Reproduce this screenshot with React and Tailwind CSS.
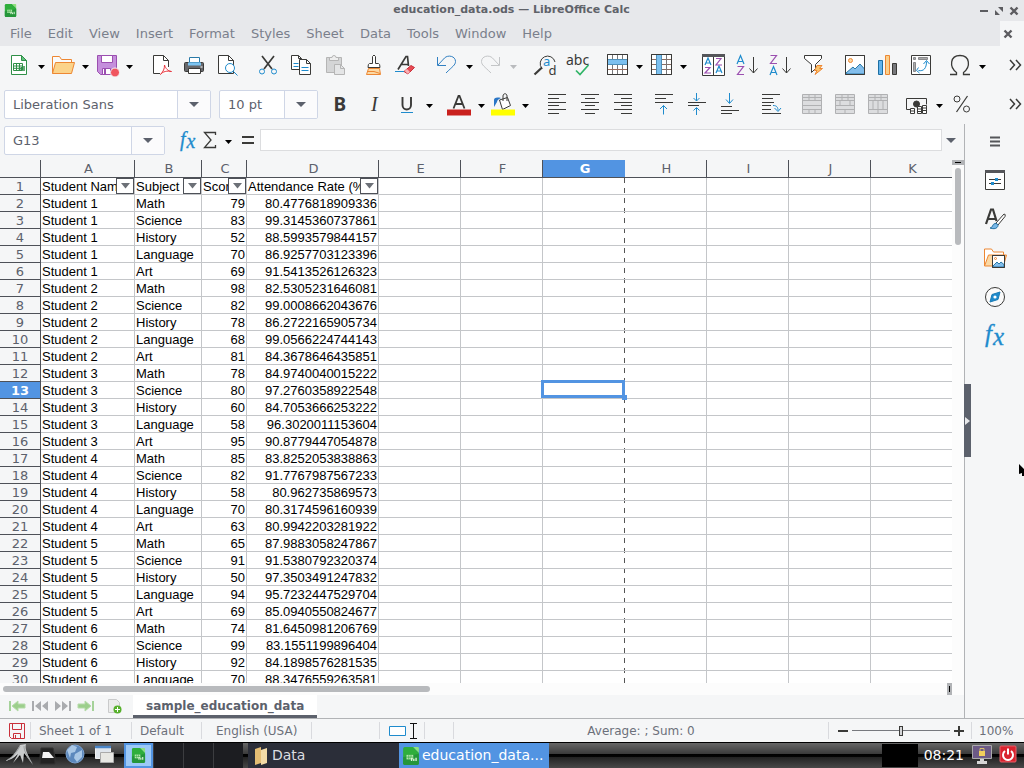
import React from "react";

const INK = "#3a3a38";
const BLUE = "#1e8bcd";
const LIGHT = "#83beec";
const PURPLE = "#9b4fb0";
const ORANGE = "#ed8733";
const GREEN = "#309048";

function Svg({ children, w = 24, h = 24, className = "" }) {
  return (
    <svg width={w} height={h} viewBox={`0 0 ${w} ${h}`} fill="none" stroke={INK} className={`shrink-0 overflow-visible ${className}`} aria-hidden="true">
      {children}
    </svg>
  );
}

const sheetPage = "M4.5 2.5h10l5 5v14h-15z";

const icons = {
  new: (
    <g stroke={GREEN}>
      <path d={sheetPage} fill="#fff" />
      <path d="M14.5 2.5v5h5z" fill="#5fc27c" />
      <path d="M6.5 10.5h9v7h-9zM6.5 13h9M6.5 15.3h9M9.5 10.5v7M12.5 10.5v7" />
      <path d="M12.5 17.500v-3M14.5 18v-4M17 18v-5" strokeWidth="1.500" />
    </g>
  ),
  open: (
    <g stroke={ORANGE}>
      <path d="M1.500 20.500v-17h7l2 3h10v4" fill="#fafafa" />
      <path d="M1.500 20.500l3-11h19l-3 11z" fill="#fbd38a" />
    </g>
  ),
  save: (
    <>
      <path d="M2.500 2.500h19v19h-16l-3-3z" fill="#c58fdc" stroke={PURPLE} />
      <path d="M6.500 2.500h11v7h-11z" fill="#fff" stroke={PURPLE} />
      <path d="M7.500 15.500h8v6h-8z" fill="#fff" stroke={PURPLE} />
      <path d="M10 16v5" stroke={PURPLE} strokeWidth="2" />
      <circle cx="20" cy="19.500" r="4.500" fill="#f0555f" stroke="#f5f6f7" />
    </>
  ),
  pdf: (
    <>
      <path d="M4.500 2.500h10l5 5v13h-15z" fill="#fff" stroke="none" />
      <path d="M11 20.500H4.500v-18h10l5 5V14M14.500 2.500v5h5" />
      <path d="M15.500 12c0 4-1 6-4 9.500 2-3 7-4 11-3-3 0-6-3-7-6.500z" stroke="#e8333c" fill="#fff" />
    </>
  ),
  print: (
    <>
      <rect x="2.500" y="9.500" width="19" height="9" rx="1" fill="#66676b" />
      <path d="M7.500 9.500v-5h10v5z" fill="#fff" stroke="#2a7aa8" />
      <path d="M6 9.500h13v3H6z" fill="#7cc4f2" stroke="none" />
      <path d="M6.500 15.500h12v5h-12z" fill="#fff" />
      <path d="M18.500 14h2" stroke="#fff" />
    </>
  ),
  preview: (
    <>
      <path d="M3.500 2.500h10l5 5v13h-15z" fill="#fff" />
      <path d="M13.500 2.500v5h5" />
      <circle cx="15" cy="15" r="4.500" fill="#fff" stroke={BLUE} />
      <path d="M18.500 18.500l4 4" stroke={BLUE} />
    </>
  ),
  cut: (
    <>
      <path d="M6 3l10 13M18 3L8 16" strokeWidth="1.700" />
      <circle cx="6" cy="18.500" r="2.500" stroke={BLUE} />
      <circle cx="18" cy="18.500" r="2.500" stroke={BLUE} />
    </>
  ),
  copy: (
    <>
      <path d="M2.500 2.500h7l3 3v11h-10z" fill="#fff" />
      <path d="M9.500 2.500v3h3" />
      <path d="M4.500 10.500h5M4.500 13.500h5" stroke={BLUE} />
      <path d="M10.500 6.500h7l4 4v11h-11z" fill="#fff" />
      <path d="M17.500 6.500v4h4" />
      <path d="M12.500 14.500h7M12.500 17.500h7" stroke={BLUE} />
    </>
  ),
  paste: (
    <g stroke="#b5b5b5">
      <path d="M4.500 4.500h15v15h-15z" fill="#d4d5d6" />
      <path d="M7.500 7.500v-3h2.500a2 2 0 0 1 4 0h2.500v3z" fill="#eee" />
      <path d="M12.500 11.500h6l4 4v6h-10z" fill="#e4e5e6" />
      <path d="M18.500 11.500v4h4" />
    </g>
  ),
  brush: (
    <>
      <path d="M11.500 10.500v-7q1.500-3 3 0v7h3q1.500 0 1.500 4H7q0-4 1.500-4z" fill="#fff" />
      <path d="M7.500 15.500h11l1 6h-14z" fill="#fbd9a5" stroke={ORANGE} />
      <path d="M6 18.500h7l6 2" stroke={ORANGE} />
    </>
  ),
  clear: (
    <>
      <path d="M4 16.500L12 3.500h1.500L14.500 13M7 11.500h7" strokeWidth="1.700" />
      <path d="M1 18.500h9" stroke={BLUE} />
      <path d="M10 18.500l7-6 3.500 2-6.500 6.500z" fill="#e84a54" stroke="#c9303a" />
      <path d="M10.500 18l2.500-2 3 3-2 2z" fill="#f7b3b7" stroke="none" />
    </>
  ),
  undo: <path d="M2.500 4v8.500H11M3 12l6.500-7C13 1.500 20.500 3 20.500 8.500c0 3.500-3 5-9.500 11.500" stroke="#3180c2" />,
  redo: <path d="M20.500 4v8.500H12M20 12l-6.500-7C10 1.500 2.500 3 2.500 8.500c0 3.500 3 5 9.500 11.500" stroke="#c3c5c7" />,
  find: (
    <>
      <path d="M9 15.500A7.500 7.500 0 1 1 22 9" />
      <path d="M9 14.500l-7.500 7" strokeWidth="2.200" />
      <text x="10" y="13" fontSize="13" fill={BLUE} stroke="none" fontFamily="Noto Sans">a</text>
      <text x="15.500" y="22" fontSize="13" fill={INK} stroke="none" fontFamily="Noto Sans">d</text>
    </>
  ),
  spell: (
    <>
      <text x="0" y="12" fontSize="14" fill={INK} stroke="none" fontFamily="Noto Sans">abc</text>
      <path d="M10 17.500l4 4 8.500-9.500" stroke="#2fb466" strokeWidth="1.700" />
    </>
  ),
  row: (
    <>
      <path d="M2.500 1.500h20v20h-20z" fill="#fff" />
      <path d="M7.500 2v19M12.500 2v19M17.500 2v19M3 6.500h19" stroke="#77777a" />
      <path d="M3 16.500h19" stroke="#9a6a5a" />
      <path d="M3 6.500h19v5H3z" fill="#7cc0ef" stroke="none" />
      <path d="M3 6.500h19M3 11.500h19" stroke="#4f8fb8" />
      <path d="M2.500 1.500h20v20h-20z" />
    </>
  ),
  col: (
    <>
      <path d="M2.500 1.500h20v20h-20z" fill="#fff" />
      <path d="M3 16.500h19M3 6.500h19M3 11.500h19" stroke="#8a6d62" />
      <path d="M17.500 2v19" stroke="#77777a" />
      <path d="M7.500 2h5v19h-5z" fill="#7cc0ef" stroke="none" />
      <path d="M7.500 2v19M12.500 2v19" stroke="#4f8fb8" />
      <path d="M2.500 1.500h20v20h-20z" />
    </>
  ),
  sort: (
    <>
      <path d="M1.500 1.500h22v21h-22zM12.500 3v19" fill="#fff" />
      <path d="M1 2.500h23" strokeWidth="3" stroke="#55565a" />
      <path d="M4 12l3-7 3 7M5 10h4M15 20l3-7 3 7M16 18h4" stroke={BLUE} strokeWidth="1.200" />
      <path d="M15 5.500h5l-5 6.500h6M4 14.500h5l-5 5.500h6" stroke={PURPLE} strokeWidth="1.200" />
    </>
  ),
  az: (
    <>
      <path d="M3 11l3.500-8.500L10 11M4.500 8.500H9" stroke={BLUE} strokeWidth="1.200" />
      <path d="M3.500 13.500h6l-6 8h6.500" stroke={PURPLE} strokeWidth="1.200" />
      <path d="M19.500 4v16M15.500 15.500l4 4.500 4-4.500" />
    </>
  ),
  za: (
    <>
      <path d="M3.500 2.500h6l-6 8h6.500" stroke={PURPLE} strokeWidth="1.200" />
      <path d="M3 22l3.500-8.500L10 22M4.500 19.500H9" stroke={BLUE} strokeWidth="1.200" />
      <path d="M19.500 4v16M15.500 15.500l4 4.500 4-4.500" />
    </>
  ),
  filter: (
    <>
      <path d="M4.500 2.500h17v3l-6 6v4l-4 4v-8l-7-6z" fill="#fff" />
      <path d="M17 12.500h5l-2.500 3h3L15 21.500l2-4h-2.500z" fill="#fbc46a" stroke={ORANGE} />
    </>
  ),
  image: (
    <>
      <path d="M2.500 2.500h19v19h-19z" fill="#fff" />
      <circle cx="7.500" cy="7.500" r="2" fill="#fbd9a5" stroke={ORANGE} />
      <path d="M3 20l7-6 2 2 5-5 4.500 5V21H3z" fill={LIGHT} stroke="#2a7aa8" />
      <path d="M2.500 2.500h19v19h-19z" />
    </>
  ),
  chart: (
    <>
      <path d="M2.500 7.500h4v14h-4z" fill="#63b4ec" stroke="#1c6fa3" />
      <path d="M9.500 2.500h4v19h-4z" fill="#fbd08b" stroke={ORANGE} />
      <path d="M16.500 10.500h4v11h-4z" fill="#77787b" />
    </>
  ),
  pivot: (
    <>
      <path d="M2.500 2.500h19v19h-19z" fill="#fff" />
      <path d="M4.500 4.500h2v2h-2zM9.500 4.500h9v2h-9zM4.500 9.500h2v9h-2z" fill="#aaa" stroke="#88898c" />
      <path d="M9.500 17.500c5 1 8-2 8-9M9.500 14.500l-2 3 3 2.500M14.500 11l3-3.500 3 3.500" stroke={BLUE} />
    </>
  ),
  omega: <path d="M2 21.500h6.500v-2C1 14 2 2.500 12 2.500S23 14 15.500 19.500v2H22" strokeWidth="1.300" />,
  bold: <text x="4.500" y="19" fontSize="19" fontWeight="700" fill={INK} stroke="none" fontFamily="Noto Sans">B</text>,
  italic: <text x="9" y="19" fontSize="20" fontStyle="italic" fill={INK} stroke="none" fontFamily="Liberation Serif">I</text>,
  underline: (
    <>
      <path d="M7.500 5v8c0 6 8.500 6 8.500 0V5" strokeWidth="1.900" />
      <path d="M6 20.500h12" stroke={BLUE} />
    </>
  ),
  fontcolor: (
    <>
      <path d="M6.500 16.500L11.500 4h1l5 12.500M8.500 12h7" strokeWidth="1.800" />
      <path d="M0 20.500h24" stroke="#c9211e" strokeWidth="6" />
    </>
  ),
  fill: (
    <>
      <path d="M8.500 8l8-2.500 3 8-8 4z" fill="#fff" />
      <path d="M12 9V4c0-3 4-3 4 0v5" />
      <path d="M3 15V8c0-2 2-3 7-2-3 1-4 3-4 4z" fill="#2a76c6" stroke="none" />
      <path d="M0 20.500h24" stroke="#ff0" strokeWidth="6" />
    </>
  ),
  left: <path d="M3 2.500h18M3 6.500h11M3 10.500h18M3 13.500h11M3 17.500h18M3 21.500h11" />,
  center: <path d="M3 2.500h18M7 6.500h10M3 10.500h18M7 13.500h10M3 17.500h18M7 21.500h10" />,
  right: <path d="M3 2.500h18M10 6.500h11M3 10.500h18M10 13.500h11M3 17.500h18M10 21.500h11" />,
  top: (
    <>
      <path d="M3 2.500h18M3 6.500h11M3 10.500h18" />
      <path d="M11.500 22.500v-9M8 17l3.500-3.500L15 17" stroke={BLUE} />
    </>
  ),
  middle: (
    <>
      <path d="M3 10.500h18M3 13.500h11" />
      <path d="M11.500 1v8M8.500 6l3 3 3-3M11.500 23v-7M8.500 18.500l3-3 3 3" stroke={BLUE} />
    </>
  ),
  bottom: (
    <>
      <path d="M3 14.500h11M3 18.500h18M3 21.500h11" />
      <path d="M11.500 1v10M8 7.500l3.500 4 3.500-4" stroke={BLUE} />
    </>
  ),
  wrap: (
    <>
      <path d="M3 2.500h18M3 6.500h11M3 10.500h12M3 13.500h9M3 17.500h9M3 21.500h19" />
      <path d="M14 13.500c4 0 5 2 5 5M15.500 16l3.500 3.500 3-3.500" stroke={BLUE} />
    </>
  ),
  merge: (
    <g stroke="#b0b1b3">
      <path d="M2.500 2.500h19v19h-19z" fill="#dcdddf" />
      <path d="M2.500 5.500h19M2.500 8.500h19M2.500 13.500h19M2.500 17.500h19M9 2.500v6M15 2.500v6M9 17.500v4M15 17.500v4" />
    </g>
  ),
  merge2: (
    <g stroke="#b0b1b3">
      <path d="M2.500 2.500h19v19h-19z" fill="#dcdddf" />
      <path d="M2.500 5.500h19M2.500 8.500h19M2.500 13.500h19M2.500 17.500h19M9 2.500v6M15 2.500v6M7 8.500v5M17 8.500v5M12 17.500v4" />
    </g>
  ),
  unmerge: (
    <g stroke="#b0b1b3">
      <path d="M2.500 2.500h19v19h-19z" fill="#dcdddf" />
      <path d="M2.500 5.500h19M2.500 8.500h19M2.500 17.500h19M9 2.500v6M15 2.500v6M7 8.500v9M12 8.500v9M17 8.500v9M12 17.500v4" />
    </g>
  ),
  money: (
    <>
      <path d="M5 17.500H1.500v-11h20v6" />
      <circle cx="11.500" cy="12" r="3" fill={INK} />
      <path d="M5.500 16.500h4v5h-4zM12.500 14.500h4v7h-4zM17.500 13.500h4v8h-4z" fill="#fff" />
      <path d="M6 19h4M13 17h3M13 19.500h3M18 16h3M18 18.500h3" />
    </>
  ),
  percent: (
    <>
      <circle cx="8" cy="7" r="3" />
      <circle cx="17.500" cy="17" r="3" />
      <path d="M18.500 4L7.500 20" strokeWidth="1.300" />
    </>
  ),
  fx: (
    <text x="5" y="18" fontSize="20" fontStyle="italic" fill={BLUE} stroke={BLUE} strokeWidth=".3" fontFamily="Liberation Serif">
      f<tspan dx="1" dy="2">x</tspan>
    </text>
  ),
  sigma: <path d="M16.500 7V4.500h-11L12 12l-6.500 7.500h11V17" strokeWidth="1.300" />,
  equals: <path d="M6 9h12M6 15h12" strokeWidth="2" />,
  properties: (
    <>
      <path d="M2.500 2.500h19v19h-19z" fill="#fff" />
      <path d="M2 3.500h20" strokeWidth="3" stroke="#55565a" />
      <path d="M6 11.500h12M6 15.500h12" />
      <path d="M12 11.500h3M8 15.500h3" strokeWidth="3" stroke={BLUE} />
    </>
  ),
  styles: (
    <>
      <path d="M3 17L8 2.500h2L13.500 14M5 12h8" strokeWidth="2.200" />
      <path d="M13 16l8-9q2 0 1 2.500l-7 8.500z" fill="#fff" />
      <path d="M7 21c3 0 2-4 5-4.500 3 0 4 2 2 4-1.500 1.500-4 1.500-7 .5z" fill="#79b8e8" stroke="#2472a4" />
    </>
  ),
  gallery: (
    <>
      <path d="M1.500 20v-17h7l2 3h10v3" stroke={ORANGE} fill="#fff" />
      <path d="M1.500 20l4-11h18l-3 11z" fill="#fbd9a5" stroke={ORANGE} />
      <path d="M9.500 9.500h12v12h-12z" fill="#fff" />
      <circle cx="12.500" cy="12.500" r="1" stroke={ORANGE} />
      <path d="M10 20l4-4 2 2 2-2 3 2.500V21H10z" fill={LIGHT} stroke="#2a7aa8" />
      <path d="M9.500 9.500h12v12h-12z" />
    </>
  ),
  navigator: (
    <>
      <circle cx="12" cy="12" r="9.500" fill="#fafafa" />
      <path d="M17 7l-2 7.500L7 17l2-7.500z" fill={BLUE} stroke="#1c7cb5" />
      <circle cx="12" cy="12" r="1.600" fill="#fff" stroke="none" />
    </>
  ),
  functions: (
    <text x="2" y="18" fontSize="25" fontStyle="italic" fill={BLUE} stroke={BLUE} strokeWidth=".3" fontFamily="Liberation Serif">
      f<tspan dx="1" dy="3">x</tspan>
    </text>
  ),
};

function Tool({ name, label, disabled }) {
  return (
    <button type="button" aria-label={label} disabled={disabled} className="flex h-8 w-[33px] shrink-0 items-center pl-1">
      <Svg>{icons[name]}</Svg>
    </button>
  );
}

function Arrow({ label, muted }) {
  return (
    <button type="button" aria-label={label} className="flex h-8 w-[11px] shrink-0 items-center justify-center pt-1">
      <svg width="7" height="4" viewBox="0 0 7 4" className={muted ? "fill-[#b9bbbe]" : "fill-black"} aria-hidden="true">
        <path d="M0 0h7L3.500 4z" />
      </svg>
    </button>
  );
}

function More() {
  return (
    <button type="button" aria-label="More controls" className="ml-auto flex h-8 w-[18px] shrink-0 items-center justify-center">
      <Svg w={14} h={12}>
        <path d="M2 1l4.500 5L2 11M8 1l4.500 5L8 11" strokeWidth="1.500" />
      </Svg>
    </button>
  );
}

function Combo({ id, label, value, className }) {
  return (
    <div className={`flex h-[29px] shrink-0 overflow-hidden rounded-xs border border-[#cfd6e6] bg-white ${className}`}>
      <label htmlFor={id} className="sr-only">{label}</label>
      <input id={id} defaultValue={value} className="h-full min-w-0 flex-1 px-2 text-[13px] text-[#5c616c] outline-none" />
      <button type="button" aria-label={`${label} list`} className="flex w-[33px] shrink-0 items-center justify-center border-l border-[#cfd6e6] bg-[#fbfbfc]">
        <svg width="10" height="5" viewBox="0 0 10 5" className="fill-[#5c616c]" aria-hidden="true"><path d="M0 0h10L5 5z" /></svg>
      </button>
    </div>
  );
}

const menus = ["File", "Edit", "View", "Insert", "Format", "Styles", "Sheet", "Data", "Tools", "Window", "Help"];

function Cross() {
  return <Svg w={10} h={10}><path d="M1.500 1.500l7 7M8.500 1.500l-7 7" stroke="#5c5c60" strokeWidth="2.400" /></Svg>;
}

function CalcLogo({ size }) {
  return (
    <svg width={size} height={size} viewBox="0 0 16 16" aria-hidden="true" className="shrink-0">
      <path d="M2.500 0H10l5 5v9.500q0 1.500-1.500 1.500h-11Q1 16 1 14.500v-13Q1 0 2.500 0z" fill="#2fae3c" />
      <path d="M1 9l14-3v8.500q0 1.500-1.500 1.500h-11Q1 16 1 14.500z" fill="#25963a" />
      <path d="M10 0l5 5V1q0-1-1-1z" fill="#8ee07c" />
      <path d="M4 7h6v4H4z" fill="#b5e8ae" />
      <path d="M4 9h6M6 7v4M8 7v4" stroke="#33a83c" strokeWidth=".6" />
      <path d="M8.500 12.500v-3M10.500 12.500v-2M12.500 12.500v-3" stroke="#dff5da" strokeWidth="1.200" />
    </svg>
  );
}

function Header() {
  return (
    <header className="bg-[#e7e8eb]">
      <div className="flex h-[21px] items-center">
        <div className="flex flex-1 pl-1"><CalcLogo size={13} /></div>
        <h1 className="text-[11px] font-bold text-[#5f6269]">education_data.ods — LibreOffice Calc</h1>
        <div className="flex flex-1 items-center justify-end gap-[5px] pr-[5px]">
          <button type="button" aria-label="Minimize"><Svg w={10} h={10}><path d="M1 5h8" stroke="#5c5c60" strokeWidth="2" /></Svg></button>
          <button type="button" aria-label="Restore"><Svg w={10} h={10}><path d="M4 1h5v5zM1 4v5h5z" fill="#5c5c60" stroke="none" /></Svg></button>
          <button type="button" aria-label="Close window"><Cross /></button>
        </div>
      </div>
      <div className="flex h-[25px]">
        <nav className="flex flex-1 items-center pl-0.5 text-[13px] text-[#7a7f8b]">
          {menus.map((m) => (
            <button key={m} type="button" className="px-2">{m}</button>
          ))}
        </nav>
        <button type="button" aria-label="Close document" className="flex w-6 items-center bg-[#f5f6f7] pl-[3px]"><Cross /></button>
      </div>
    </header>
  );
}

function StandardBar() {
  return (
    <div className="flex h-[38px] items-center pl-[3px]">
      <Tool name="new" label="New" /><Arrow label="New options" />
      <Tool name="open" label="Open" /><Arrow label="Open options" />
      <Tool name="save" label="Save" /><Arrow label="Save options" />
      <div className="ml-2.5 flex"><Tool name="pdf" label="Export as PDF" /><Tool name="print" label="Print" /><Tool name="preview" label="Print preview" /></div>
      <div className="ml-2 flex"><Tool name="cut" label="Cut" /><Tool name="copy" label="Copy" /><Tool name="paste" label="Paste" disabled /></div>
      <div className="ml-1.5 flex"><Tool name="brush" label="Clone formatting" /><Tool name="clear" label="Clear formatting" /></div>
      <div className="ml-2 flex"><Tool name="undo" label="Undo" /><Arrow label="Undo list" /><Tool name="redo" label="Redo" disabled /><Arrow label="Redo list" muted /></div>
      <div className="ml-2.5 flex"><Tool name="find" label="Find and replace" /><Tool name="spell" label="Spelling" /></div>
      <div className="ml-1.5 flex"><Tool name="row" label="Row" /><Arrow label="Row options" /><Tool name="col" label="Column" /><Arrow label="Column options" /></div>
      <div className="ml-2 flex"><Tool name="sort" label="Sort" /><Tool name="az" label="Sort ascending" /><Tool name="za" label="Sort descending" /><Tool name="filter" label="AutoFilter" /></div>
      <div className="ml-2.5 flex"><Tool name="image" label="Insert image" /><Tool name="chart" label="Insert chart" /><Tool name="pivot" label="Pivot table" /></div>
      <div className="ml-1.5 flex"><Tool name="omega" label="Special character" /><Arrow label="Character options" /></div>
      <More />
    </div>
  );
}

function FormatBar() {
  return (
    <div className="flex h-10 items-center pl-1">
      <Combo id="font" label="Font name" value="Liberation Sans" className="w-[207px]" />
      <Combo id="size" label="Font size" value="10 pt" className="ml-2 w-[99px]" />
      <div className="ml-[7px] flex"><Tool name="bold" label="Bold" /><Tool name="italic" label="Italic" /><Tool name="underline" label="Underline" /><Arrow label="Underline options" /></div>
      <div className="ml-2 flex"><Tool name="fontcolor" label="Font color" /><Arrow label="Font color options" /><Tool name="fill" label="Background color" /><Arrow label="Background options" /></div>
      <div className="ml-2.5 flex"><Tool name="left" label="Align left" /><Tool name="center" label="Center" /><Tool name="right" label="Align right" /></div>
      <div className="ml-2 flex"><Tool name="top" label="Align top" /><Tool name="middle" label="Center vertically" /><Tool name="bottom" label="Align bottom" /></div>
      <div className="ml-2 flex"><Tool name="wrap" label="Wrap text" /></div>
      <div className="ml-2 flex"><Tool name="merge" label="Merge and center" disabled /><Tool name="merge2" label="Merge cells" disabled /><Tool name="unmerge" label="Unmerge cells" disabled /></div>
      <div className="ml-1.5 flex"><Tool name="money" label="Currency" /><Arrow label="Currency options" /><Tool name="percent" label="Percent" /></div>
      <More />
    </div>
  );
}

function FormulaBar() {
  return (
    <div className="flex h-9 shrink-0 items-start pt-0.5 pl-1">
      <Combo id="name-box" label="Name box" value="G13" className="w-[161px]" />
      <div className="flex h-7 flex-1 items-center">
        <button type="button" aria-label="Function wizard" className="ml-2.5"><Svg>{icons.fx}</Svg></button>
        <button type="button" aria-label="Select function"><Svg>{icons.sigma}</Svg></button>
        <Arrow label="Function options" />
        <button type="button" aria-label="Formula" className="ml-0.5"><Svg>{icons.equals}</Svg></button>
        <label htmlFor="formula" className="sr-only">Input line</label>
        <input id="formula" className="h-[22px] min-w-0 flex-1 border border-[#dcdddf] bg-white outline-none" />
        <button type="button" aria-label="Expand formula bar" className="flex h-6 w-[22px] items-center justify-center pr-1">
          <svg width="10" height="5" viewBox="0 0 10 5" className="fill-[#5c616c]" aria-hidden="true"><path d="M0 0h10L5 5z" /></svg>
        </button>
      </div>
    </div>
  );
}

const subjects = ["Math", "Science", "History", "Language", "Art"];
const results = [
  [79, "80.4776818909336"], [83, "99.3145360737861"], [52, "88.5993579844157"], [70, "86.9257703123396"], [69, "91.5413526126323"],
  [98, "82.5305231646081"], [82, "99.0008662043676"], [78, "86.2722165905734"], [68, "99.0566224744143"], [81, "84.3678646435851"],
  [78, "84.9740040015222"], [80, "97.2760358922548"], [60, "84.7053666253222"], [58, "96.3020011153604"], [95, "90.8779447054878"],
  [85, "83.8252053838863"], [82, "91.7767987567233"], [58, "80.962735869573"], [70, "80.3174596160939"], [63, "80.9942203281922"],
  [65, "87.9883058247867"], [91, "91.5380792320374"], [50, "97.3503491247832"], [94, "95.7232447529704"], [69, "85.0940550824677"],
  [74, "81.6450981206769"], [99, "83.1551199896404"], [92, "84.1898576281535"], [70, "88.3476559263581"],
];
const letters = ["A", "B", "C", "D", "E", "F", "G", "H", "I", "J", "K"];
const fields = ["Student Name", "Subject", "Score", "Attendance Rate (%)"];

function rowCells(i) {
  const [score, rate] = results[i];
  return [`Student ${Math.floor(i / 5) + 1}`, subjects[i % 5], score, rate];
}

function RowHead({ n }) {
  const active = n === 13;
  return (
    <th scope="row" className={`h-[17px] border-r border-b border-[#4e5158] px-0 pt-0.5 pb-0 text-center font-[DejaVu_Sans] text-[13px] leading-3.5 ${active ? "bg-[#5294e2] font-bold text-white" : "bg-[#f5f6f7] font-normal text-[#5c616c]"}`}>
      {n}
    </th>
  );
}

function EmptyCells({ row }) {
  return letters.slice(4).map((l) => (
    <td key={l} className={`relative border-b border-[#c4c6c9] p-0 ${l === "G" || l === "K" ? "" : "border-r"}`}>
      {l === "G" && row === 13 && (
        <span className="absolute -top-0.5 right-0 bottom-0 -left-0.5 z-10 border-3 border-[#5294e2]">
          <span className="absolute -right-[5px] -bottom-[5px] h-[5px] w-[5px] bg-[#5294e2]" />
        </span>
      )}
    </td>
  ));
}

function Sheet() {
  return (
    <div className="min-h-0 min-w-0 flex-1 overflow-hidden bg-white">
      <table className="w-full table-fixed border-separate border-spacing-0 font-[Liberation_Sans,Arial,sans-serif] text-[13px] leading-3.5 text-black">
        <colgroup>
          <col className="w-[41px]" /><col className="w-[94px]" /><col className="w-[67px]" /><col className="w-[45px]" /><col className="w-[132px]" />
          <col className="w-[82px]" /><col className="w-[82px]" /><col className="w-[82px]" /><col className="w-[82px]" /><col className="w-[82px]" /><col className="w-[82px]" /><col />
        </colgroup>
        <thead>
          <tr className="font-[DejaVu_Sans]">
            <td className="h-[18px] border-r border-b border-[#4e5158] bg-[#f5f6f7] p-0" />
            {letters.map((l) => (
              <th key={l} scope="col" className={`relative h-[18px] border-b border-[#4e5158] py-0 pr-0 pl-0.5 text-center text-[13px] leading-4 ${l === "G" ? "bg-[#5294e2] font-bold text-white" : "bg-[#f5f6f7] font-normal text-[#5c616c]"} ${l === "G" || l === "K" ? "" : "border-r"}`}>
                {l}
                {l === "G" && (
                  <span className="absolute top-full right-0 mt-px h-screen w-px bg-[repeating-linear-gradient(180deg,#555_0_5px,#fff_5px_10px)]" />
                )}
              </th>
            ))}
          </tr>
        </thead>
        <tbody>
          <tr>
            <RowHead n={1} />
            {fields.map((f) => (
              <td key={f} className="border-r border-b border-[#c4c6c9] p-0">
                <div className="flex h-4">
                  <span className="min-w-0 flex-1 overflow-hidden pt-0.5 pl-px whitespace-nowrap">{f}</span>
                  <button type="button" aria-label={`Filter ${f}`} className="flex h-4 w-[18px] shrink-0 items-center justify-center border border-[#4e5158] bg-white">
                    <svg width="9" height="6" viewBox="0 0 9 6" className="fill-[#6c7077]" aria-hidden="true"><path d="M0 0h9L4.500 5.500z" /></svg>
                  </button>
                </div>
              </td>
            ))}
            <EmptyCells row={1} />
          </tr>
          {results.map((_, i) => (
            <tr key={i}>
              <RowHead n={i + 2} />
              {rowCells(i).map((v, c) => (
                <td key={c} className={`border-r border-b border-[#c4c6c9] px-px pt-0.5 pb-0 whitespace-nowrap ${c > 1 ? "text-right" : ""}`}>{v}</td>
              ))}
              <EmptyCells row={i + 2} />
            </tr>
          ))}
        </tbody>
      </table>
    </div>
  );
}

function SheetTabs() {
  return (
    <div className="flex h-[23px] shrink-0 items-center">
      <div className="flex gap-[7px] pb-0.5 pl-[9px]">
        <button type="button" aria-label="First sheet"><Svg w={16} h={12}><path d="M1 1v10" stroke="#a5d29a" strokeWidth="2" /><path d="M3 6l6-5v3h7v4H9v3z" fill="#9ccf8c" stroke="#b5dba9" /></Svg></button>
        <button type="button" aria-label="Previous sheet"><Svg w={16} h={12}><path d="M0 1h2v10H0zM9 1v10L3 6zM16 1v10l-6-5z" fill="#a9abae" stroke="none" /></Svg></button>
        <button type="button" aria-label="Next sheet"><Svg w={16} h={12}><path d="M0 1v10l6-5zM7 1v10l6-5zM14 1h2v10h-2z" fill="#a9abae" stroke="none" /></Svg></button>
        <button type="button" aria-label="Last sheet"><Svg w={16} h={12}><path d="M15 1v10" stroke="#a5d29a" strokeWidth="2" /><path d="M13 6L7 1v3H0v4h7v3z" fill="#9ccf8c" stroke="#b5dba9" /></Svg></button>
      </div>
      <button type="button" aria-label="Add sheet" className="mr-2.5 ml-[11px] pb-0.5">
        <Svg w={18} h={16}>
          <path d="M3.500 1.500h8l3 3v10h-11z" fill="#ececec" stroke="#c9cacb" />
          <circle cx="12.500" cy="11.500" r="4" fill="#57b02c" stroke="none" />
          <path d="M12.500 9v5M10 11.500h5" stroke="#fff" />
        </Svg>
      </button>
      <button type="button" className="flex h-full items-center border-b-3 border-[#5c616c] bg-white px-[13px] pt-0.5 text-[12px] font-bold text-[#5c616c]">sample_education_data</button>
    </div>
  );
}

function Sidebar() {
  const items = [["properties", "Properties"], ["styles", "Styles"], ["gallery", "Gallery"], ["navigator", "Navigator"], ["functions", "Functions"]];
  return (
    <aside className="relative flex w-[60px] shrink-0 flex-col items-center border-l border-[#b1b3b6]">
      <button type="button" aria-label="Sidebar settings" className="flex h-9 items-center"><Svg w={10} h={12}><path d="M0 1.500h10M0 5.500h10M0 9.500h10" stroke="#55565a" strokeWidth="2" /></Svg></button>
      {items.map(([name, label]) => (
        <button key={name} type="button" aria-label={label} className="flex h-[39px] items-center"><Svg>{icons[name]}</Svg></button>
      ))}
      <button type="button" aria-label="Hide sidebar" className="absolute top-[260px] -left-px flex h-[73px] w-[7px] items-center bg-[#5c616c]">
        <svg width="6" height="8" viewBox="0 0 6 8" className="fill-[#e8e9eb]" aria-hidden="true"><path d="M1 0v8l5-4z" /></svg>
      </button>
      <svg width="5" height="12" viewBox="0 0 5 12" className="absolute top-[340px] right-0" aria-hidden="true"><path d="M0 0l5 5v7H3V9L0 10z" /></svg>
    </aside>
  );
}

function StatusBar() {
  const cell = "flex h-[17px] shrink-0 items-center border-r border-[#d9dade]";
  return (
    <footer className="flex h-6 shrink-0 items-center border-t border-[#b1b3b6] text-[12px] text-[#6c707a]">
      <div className={`${cell} w-[31px] pl-[9px]`}>
        <Svg w={16} h={16}><path d="M.5.5h15v15h-13l-2-2zM3.500 .5v6h9v-6M4.500 15.500v-5h7v5M6.500 12v3" stroke="#c9303a" /></Svg>
      </div>
      <div className={`${cell} w-[101px] pl-2`}>Sheet 1 of 1</div>
      <div className={`${cell} w-[70px] pl-2`}>Default</div>
      <div className={`${cell} w-[110px] pl-3.5`}>English (USA)</div>
      <div className={`${cell} w-[68px]`} />
      <div className={`${cell} w-[45px] pl-[9px]`}>
        <Svg w={30} h={17}><path d="M.5 4.500h16v9H.5z" stroke={BLUE} fill="#fff" /><path d="M21 1.500h7M24.500 1.500v15M21 16.500h7" stroke="#111" /></Svg>
      </div>
      <div className={`${cell} w-[29px]`} />
      <div className={`${cell} min-w-0 flex-1 justify-center`}>Average: ; Sum: 0</div>
      <div className={`${cell} w-[143px] gap-1 pl-[9px]`}>
        <button type="button" aria-label="Zoom out"><Svg w={10} h={10}><path d="M0 5h10" strokeWidth="2" /></Svg></button>
        <label htmlFor="zoom" className="sr-only">Zoom</label>
        <input id="zoom" type="range" defaultValue="50" className="h-3 w-[98px] appearance-none bg-[linear-gradient(#77797e,#77797e)] bg-[length:100%_1px] bg-center bg-no-repeat [&::-webkit-slider-thumb]:h-2.5 [&::-webkit-slider-thumb]:w-1 [&::-webkit-slider-thumb]:appearance-none [&::-webkit-slider-thumb]:border [&::-webkit-slider-thumb]:border-[#3a3a38] [&::-webkit-slider-thumb]:bg-[#d5d6d8]" />
        <button type="button" aria-label="Zoom in"><Svg w={10} h={10}><path d="M0 5h10M5 0v10" strokeWidth="2" /></Svg></button>
      </div>
      <div className="w-[52px] shrink-0 pl-[7px]">100%</div>
    </footer>
  );
}

function Taskbar() {
  return (
    <nav className="flex h-[26px] shrink-0 items-stretch border-t border-black bg-[linear-gradient(#666_0%,#3c3c3c_42%,#000_44%,#050505_56%,#242424_58%,#484848_100%)] text-[14px] text-[#dcdde0]">
      <button type="button" aria-label="Menu" className="pl-1">
        <Svg w={30} h={25}>
          <path d="M1 18C8 15 12 9 16 2l6-1c-1 4 0 7 2 11l5 10-9-12-1 10-3-8-7 8 5-9c-4 4-8 6-13 7z" fill="#c9cbcc" stroke="none" />
          <path d="M3 17C9 14 13 9 16 3M20 3c0 5 3 10 8 17" stroke="#8a8c8e" strokeWidth=".7" />
        </Svg>
      </button>
      <button type="button" aria-label="File manager" className="pl-1">
        <Svg w={20} h={25}><path d="M3 5h12l2 9v7H2v-7z" fill="#222" stroke="#333" /><path d="M5 9h6l5 6H4z" fill="#f4f4f4" stroke="none" /></Svg>
      </button>
      <button type="button" aria-label="Web browser" className="pl-1.5">
        <Svg w={22} h={25}><circle cx="11" cy="11" r="9" fill="#5c88bd" stroke="#7ca3d2" /><path d="M3 7l5-5 5 2-2 5-4 1-1 5zM11 11l7-4v7l-5 5-3-4z" fill="#a9c7e6" stroke="none" /></Svg>
      </button>
      <button type="button" aria-label="Show desktop" className="pl-2">
        <Svg w={22} h={25}><path d="M1.500 3.500h15v12h-15z" fill="#dfe5ec" stroke="#f2f2f2" /><path d="M1 4h16" stroke="#4b86c8" strokeWidth="2.500" /><path d="M6.500 9.500h13v10h-13z" fill="#e7e7e3" stroke="#aaa" /></Svg>
      </button>
      <div className="ml-2 flex gap-px bg-[#3c3d40]">
        <button type="button" aria-label="Workspace 1" className="flex w-[29px] items-center justify-center border-2 border-[#5294e2] bg-[#9cc9f7]"><CalcLogo size={15} /></button>
        <button type="button" aria-label="Workspace 2" className="w-[29px] bg-[#1c1d21]" />
        <button type="button" aria-label="Workspace 3" className="w-[29px] bg-[#1c1d21]" />
        <button type="button" aria-label="Workspace 4" className="w-[29px] bg-[#1c1d21]" />
      </div>
      <button type="button" className="ml-[5px] flex w-[151px] items-center gap-1 bg-[#2b2e39] pl-1.5">
        <Svg w={14} h={20}><path d="M1 3l6-2v16l-6 2z" fill="#e4bd74" stroke="none" /><path d="M7 4l6-2v15l-6 2z" fill="#f3dba6" stroke="none" /></Svg>
        Data
      </button>
      <button type="button" className="flex w-[150px] items-center gap-0.5 bg-[#5294e2] pl-[3px] whitespace-nowrap text-white"><CalcLogo size={18} />education_data...</button>
      <div className="my-px ml-auto w-9 bg-black" />
      <time className="flex items-center pl-1.5 text-white">08:21</time>
      <button type="button" aria-label="Lock screen" className="pl-2">
        <Svg w={20} h={25}><path d="M.5 2.500h19v13H.5z" fill="#6c5a86" stroke="#aaa" /><path d="M8 8V5.500h4V8" stroke="#d9c06a" /><path d="M7 8h6v5H7z" fill="#f1cf5d" stroke="none" /><path d="M8 16h4v2h3v3H5v-3h3z" fill="#d6d6d6" stroke="none" /></Svg>
      </button>
      <button type="button" aria-label="Power" className="px-1.5">
        <Svg w={20} h={25}><rect x="2" y="3" width="16" height="16" rx="1" fill="#d9232e" stroke="#e8606a" /><path d="M7 8a5 5 0 1 0 6 0M10 5.500v6" stroke="#fff" strokeWidth="2" /></Svg>
      </button>
    </nav>
  );
}

export default function App() {
  return (
    <div className="flex h-screen flex-col overflow-hidden bg-[#f5f6f7] font-[DejaVu_Sans,Verdana,sans-serif]">
      <Header />
      <StandardBar />
      <FormatBar />
      <main className="flex min-h-0 flex-1">
        <div className="flex min-w-0 flex-1 flex-col">
          <FormulaBar />
          <div className="flex min-h-0 flex-1">
            <Sheet />
            <div className="flex w-3 shrink-0 flex-col items-center bg-[#fcfcfc]">
              <div className="flex h-[5px] w-full items-center justify-center bg-[#b1b3b6]"><div className="h-px w-1.5 bg-black" /></div>
              <div className="mt-[3px] h-[77px] w-1.5 rounded-full bg-[#b8babd]" />
            </div>
          </div>
          <div className="flex h-3 shrink-0 items-center bg-[#fcfcfc] pr-3 pl-[3px]">
            <div className="h-1.5 w-[45%] rounded-full bg-[#b8babd]" />
            <div className="ml-auto flex h-full w-[5px] items-center justify-center bg-[#b1b3b6]"><div className="h-1.5 w-px bg-black" /></div>
          </div>
          <SheetTabs />
        </div>
        <Sidebar />
      </main>
      <StatusBar />
      <Taskbar />
    </div>
  );
}
